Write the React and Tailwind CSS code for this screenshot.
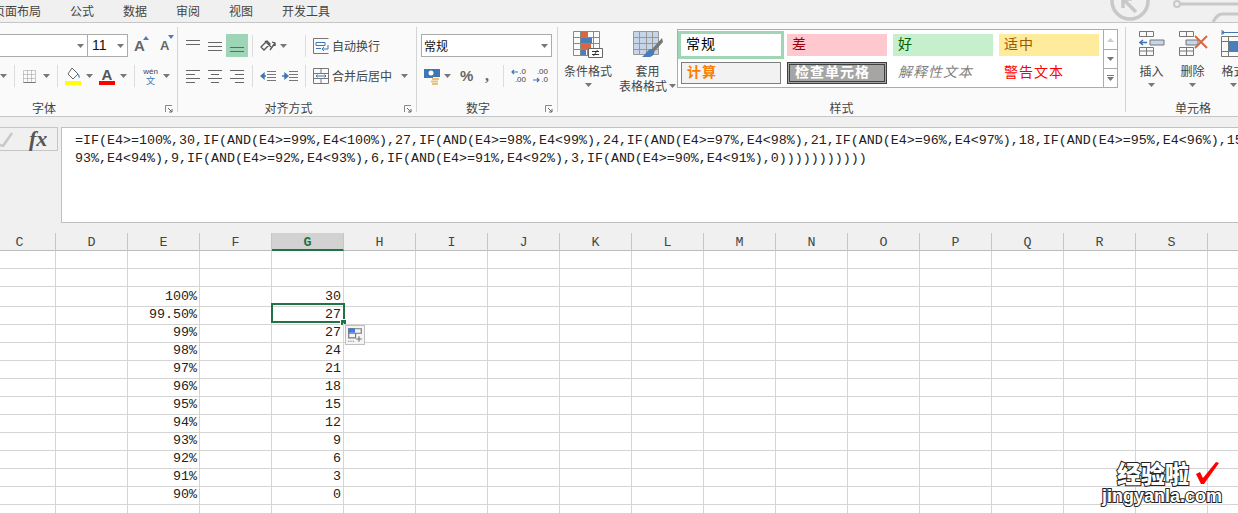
const cjk = "font-['Noto_Sans_CJK_SC',sans-serif]";
const mono = "font-['Liberation_Mono','Noto_Sans_CJK_SC',monospace]";

const columns = ['C', 'D', 'E', 'F', 'G', 'H', 'I', 'J', 'K', 'L', 'M', 'N', 'O', 'P', 'Q', 'R', 'S', 'T'];

const rows = [
  {},
  {},
  { e: '100%', g: '30' },
  { e: '99.50%', g: '27', selected: true },
  { e: '99%', g: '27', paste: true },
  { e: '98%', g: '24' },
  { e: '97%', g: '21' },
  { e: '96%', g: '18' },
  { e: '95%', g: '15' },
  { e: '94%', g: '12' },
  { e: '93%', g: '9' },
  { e: '92%', g: '6' },
  { e: '91%', g: '3' },
  { e: '90%', g: '0' },
  {},
];

const Caret = ({ className = '' }) => (
  <svg width="7" height="4" viewBox="0 0 7 4" className={`shrink-0 ${className}`}>
    <path d="M0 0h7L3.5 4z" fill="#777" />
  </svg>
);

const Sep = ({ className = '' }) => <div className={`w-px h-[22px] shrink-0 bg-[#dcdcdc] ${className}`} />;

const Launcher = () => (
  <svg width="8" height="8" viewBox="0 0 8 8" className="absolute right-[4px] top-[5px]">
    <path d="M0.5 7V0.5H7" fill="none" stroke="#888" />
    <path d="M3 3l4 4M7 4v3H4" fill="none" stroke="#666" />
  </svg>
);

const Lines = ({ widths, y, className = '' }) => (
  <svg width="14" height="14" viewBox="0 0 14 14" className={`shrink-0 ${className}`}>
    {widths.map((w, i) => (
      <path key={i} d={`M${w[0]} ${y + i * 4 + 0.5}H${w[1]}`} stroke="#666" />
    ))}
  </svg>
);

const Indent = ({ flip, className = '' }) => (
  <svg width="16" height="12" viewBox="0 0 16 12" className={`shrink-0 ${className}`}>
    <path d="M7 1.5h9M7 4.5h9M7 7.5h9M7 10.5h9" stroke="#777" />
    <path d={flip ? 'M0 6h4M3 3.5L6 6 3 8.5z' : 'M2 6h4M4 3.5L1 6l3 2.5z'} stroke="#3f77b5" fill="#3f77b5" strokeWidth="1.4" />
  </svg>
);

const GroupLabel = ({ children, launcher }) => (
  <div className={`relative h-[16px] mt-auto -mb-[4px] text-center text-[12px] leading-[16px] text-[#444] ${cjk}`}>
    {children}
    {launcher && <Launcher />}
  </div>
);

const Group = ({ className, children }) => (
  <div className={`flex flex-col shrink-0 my-[4px] ${className}`}>{children}</div>
);

const FontGroup = () => (
  <Group className="w-[178px] border-r border-[#d4d4d4]">
    <div className="flex items-center h-[23px] mt-[7px]">
      <div className="w-[89px] -ml-px h-[23px] border border-[#ababab] bg-white flex items-center justify-end pr-[3px]">
        <Caret />
      </div>
      <div className="w-[40px] h-[23px] border border-l-0 border-[#ababab] bg-white flex items-center justify-between pl-[4px] pr-[3px]">
        <span className="text-[14px] font-['Liberation_Sans',sans-serif] text-[#111]">11</span>
        <Caret />
      </div>
      <div className="relative ml-[6px] w-[14px] text-[15px] font-bold leading-none text-[#666] font-['Liberation_Sans',sans-serif]">
        A
        <svg width="6" height="4" viewBox="0 0 6 4" className="absolute left-[9px] -top-[2px]"><path d="M3 0l3 4H0z" fill="#4a7ebb" /></svg>
      </div>
      <div className="relative ml-[12px] w-[12px] text-[13px] font-bold leading-none text-[#666] font-['Liberation_Sans',sans-serif]">
        A
        <svg width="6" height="4" viewBox="0 0 6 4" className="absolute left-[8px] -top-[4px]"><path d="M0 0h6L3 4z" fill="#4a7ebb" /></svg>
      </div>
    </div>
    <div className="flex items-center h-[22px] mt-[8px]">
      <Caret />
      <Sep className="ml-[7px]" />
      <svg width="13" height="13" viewBox="0 0 13 13" className="ml-[8px] shrink-0">
        <path d="M.5.5h12v12H.5zM4.5.5v12M8.5.5v12M.5 4.5h12M.5 8.5h12" fill="none" stroke="#999" strokeDasharray="1 1" />
        <path d="M.5 12.5h12" stroke="#777" />
      </svg>
      <Caret className="ml-[7px]" />
      <Sep className="ml-[7px]" />
      <svg width="16" height="18" viewBox="0 0 16 18" className="ml-[7px] shrink-0">
        <path d="M7 1l6 6-5 5-5-5z" fill="#fff" stroke="#666" />
        <path d="M13 7c1.5 1 2 2.500 1.500 4-1-.5-1.500-2-1.500-4z" fill="#3f77b5" />
        <path d="M0 14h16v4H0z" fill="#ffff00" />
      </svg>
      <Caret className="ml-[5px]" />
      <div className="relative ml-[6px] w-[16px] h-[18px] text-center text-[15px] leading-[15px] text-[#555] font-bold font-['Liberation_Sans',sans-serif]">
        A
        <div className="absolute left-0 bottom-0 w-[16px] h-[4px] bg-[#ff0000]" />
      </div>
      <Caret className="ml-[5px]" />
      <Sep className="ml-[7px]" />
      <div className="ml-[8px] w-[15px] flex flex-col items-center leading-none">
        <span className="text-[8px] text-[#444] font-['Liberation_Sans',sans-serif]">wén</span>
        <span className={`text-[9px] text-[#3f77b5] ${cjk}`}>文</span>
      </div>
      <Caret className="ml-[5px]" />
    </div>
    <GroupLabel launcher>
      <span className="-ml-[89px] inline-block">字体</span>
    </GroupLabel>
  </Group>
);

const AlignGroup = () => (
  <Group className="w-[239px] border-r border-[#d4d4d4]">
    <div className="flex items-center h-[23px] mt-[7px]">
      <Lines className="ml-[8px]" widths={[[0, 14], [0, 14]]} y={1} />
      <Lines className="ml-[8px]" widths={[[0, 14], [0, 14], [0, 14]]} y={3} />
      <div className="ml-[4px] w-[22px] h-[23px] bg-[#9fd5b7] flex items-end justify-center pb-[3px]">
        <Lines widths={[[0, 14], [0, 14]]} y={7} />
      </div>
      <Sep className="ml-[4px]" />
      <svg width="17" height="16" viewBox="0 0 17 16" className="ml-[7px] shrink-0">
        <path d="M1 9l6-6 3 3-6 6zM5 3l6 6M10 12l5-7M12 4l3 1 0 3" fill="none" stroke="#555" strokeWidth="1.300" />
      </svg>
      <Caret className="ml-[3px]" />
      <Sep className="ml-[18px]" />
      <svg width="16" height="16" viewBox="0 0 16 16" className="ml-[7px] shrink-0">
        <path d="M.5.5h15M.5.500v15h15" fill="none" stroke="#777" />
        <path d="M3 4.500h9v3H3zM3 10.500h5" fill="none" stroke="#3f77b5" />
        <path d="M15 7v4h-5M11 9l-2 2 2 2" fill="none" stroke="#3f77b5" />
      </svg>
      <span className={`ml-[3px] text-[12px] text-[#444] ${cjk}`}>自动换行</span>
    </div>
    <div className="flex items-center h-[22px] mt-[8px]">
      <Lines className="ml-[8px]" widths={[[0, 14], [0, 9], [0, 14], [0, 9]]} y={1} />
      <Lines className="ml-[8px]" widths={[[0, 14], [3, 11], [0, 14], [3, 11]]} y={1} />
      <Lines className="ml-[8px]" widths={[[0, 14], [5, 14], [0, 14], [5, 14]]} y={1} />
      <Sep className="ml-[8px]" />
      <Indent className="ml-[7px]" />
      <Indent flip className="ml-[6px]" />
      <Sep className="ml-[7px]" />
      <svg width="16" height="16" viewBox="0 0 16 16" className="ml-[7px] shrink-0">
        <path d="M.5.500h15v15H.5zM.5 5.500h15M.5 10.500h15M8 .500v5M8 10.500v5" fill="none" stroke="#777" />
        <path d="M3 8h10M4.500 6.500L3 8l1.500 1.500M11.500 6.500L13 8l-1.500 1.500" fill="none" stroke="#3f77b5" />
      </svg>
      <span className={`ml-[3px] w-[60px] whitespace-nowrap text-[12px] text-[#444] ${cjk}`}>合并后居中</span>
      <Caret className="ml-[9px]" />
    </div>
    <GroupLabel launcher>
      <span className="-ml-[17px] inline-block">对齐方式</span>
    </GroupLabel>
  </Group>
);

const NumberGroup = () => (
  <Group className="w-[141px] border-r border-[#d4d4d4]">
    <div className="flex items-center h-[23px] mt-[7px]">
      <div className={`ml-[4px] w-[131px] h-[23px] border border-[#ababab] bg-white flex items-center justify-between pl-[2px] pr-[3px] text-[12px] text-[#111] ${cjk}`}>
        常规
        <Caret />
      </div>
    </div>
    <div className="flex items-center h-[22px] mt-[8px]">
      <svg width="16" height="17" viewBox="0 0 16 17" className="ml-[7px] shrink-0">
        <path d="M0 1h16v8H9v1H0z" fill="#3f77b5" />
        <circle cx="7" cy="5" r="2.500" fill="#fff" />
        <path d="M8 10h7v2H8zM7 12.500h7v2H7zM8 15h6v2H8z" fill="#e8c27a" />
      </svg>
      <Caret className="ml-[4px]" />
      <span className="ml-[9px] w-[12px] text-center text-[15px] font-bold text-[#666] font-['Liberation_Sans',sans-serif]">%</span>
      <span className="ml-[12px] w-[6px] text-center text-[16px] font-bold leading-[10px] text-[#666] font-['Liberation_Serif',serif]">,</span>
      <Sep className="ml-[13px]" />
      <div className="relative ml-[7px] w-[15px] h-[16px] text-[8px] leading-[8px] text-[#444] font-['Liberation_Sans',sans-serif]">
        <div className="text-right">.0</div>
        <div className="text-right">.00</div>
        <svg width="7" height="6" viewBox="0 0 7 6" className="absolute left-0 top-[1px]"><path d="M7 3H1M3 1L1 3l2 2" fill="none" stroke="#3f77b5" strokeWidth="1.200" /></svg>
      </div>
      <div className="relative ml-[7px] w-[15px] h-[16px] text-[8px] leading-[8px] text-[#444] font-['Liberation_Sans',sans-serif]">
        <div className="text-right">.00</div>
        <div className="text-right">.0</div>
        <svg width="7" height="6" viewBox="0 0 7 6" className="absolute left-0 top-[9px]"><path d="M0 3h6M4 1l2 2-2 2" fill="none" stroke="#3f77b5" strokeWidth="1.200" /></svg>
      </div>
    </div>
    <GroupLabel launcher>
      <span className="-ml-[18px] inline-block">数字</span>
    </GroupLabel>
  </Group>
);

const styleCell = 'h-[22px] flex items-center pl-[5px] pb-[3px] text-[14px] tracking-[1px] whitespace-nowrap';

const StylesGroup = () => (
  <Group className="w-[568px] border-r border-[#d4d4d4]">
    <div className="flex items-start h-[60px] mt-[2px]">
      <div className={`w-[60px] flex flex-col items-center text-[12px] leading-[15px] text-[#444] ${cjk}`}>
        <svg width="30" height="27" viewBox="0 0 30 27" className="mb-[5px] mt-[2px]">
          <path d="M.5.500h26v24H.5zM7.500.500v24M14.500.500v24M20.500.500v24M.5 6.500h26M.5 12.500h26M.5 18.500h26" fill="none" stroke="#888" />
          <path d="M8 1h6v5H8zM8 13h10v5H8z" fill="#d9663f" />
          <path d="M8 7h11v5H8zM8 19h5v5H8z" fill="#4a7ebb" />
          <path d="M15.500 17.500h14v9h-14z" fill="#fff" stroke="#666" />
          <path d="M19 20.500h7M19 23.500h7M24.500 19l-4 6" fill="none" stroke="#333" />
        </svg>
        条件格式
        <Caret className="mt-[5px]" />
      </div>
      <div className={`w-[59px] flex flex-col items-center text-[12px] leading-[15px] text-[#444] ${cjk}`}>
        <svg width="30" height="28" viewBox="0 0 30 28" className="mb-[4px] mt-[2px]">
          <path d="M.5.500h25v23H.5z" fill="#c7d5e8" stroke="#999" />
          <path d="M.5 6.500h25M.5 12.500h25M.5 18.500h25M6.500.500v23M13.500.500v23M19.500.500v23" stroke="#999" />
          <path d="M29 7L18 19l2 3L30 11z" fill="#777" />
          <path d="M18 18c-4 1-5 5-9 8h8c3-1 5-3 4-6z" fill="#4a7ebb" />
        </svg>
        <span>套用</span>
        <div className="flex items-center whitespace-nowrap">
          表格格式
          <Caret className="ml-[2px]" />
        </div>
      </div>
      <div className={`w-[441px] h-[59px] border border-[#ababab] bg-white flex ${cjk}`}>
        <div className="w-[425px] pl-[3px] pt-[4px] grid grid-cols-[repeat(4,100px)] auto-rows-[22px] gap-x-[6px] gap-y-[6px]">
          <div className={`${styleCell} outline-3 outline-[#a0d5b5] text-black`}>常规</div>
          <div className={`${styleCell} bg-[#ffc7ce] text-[#9c0006]`}>差</div>
          <div className={`${styleCell} bg-[#c6efce] text-[#006100]`}>好</div>
          <div className={`${styleCell} bg-[#ffeb9c] text-[#9c5700]`}>适中</div>
          <div className={`${styleCell} bg-[#f2f2f2] border border-[#7f7f7f] font-bold text-[#fa7d00]`}>计算</div>
          <div className={`${styleCell} bg-[#a5a5a5] border-[3px] border-double border-[#3f3f3f] font-bold text-white`}>检查单元格</div>
          <div className={`${styleCell} italic text-[#7f7f7f]`}>解释性文本</div>
          <div className={`${styleCell} text-[#ff0000]`}>警告文本</div>
        </div>
        <div className="w-[14px] border-l border-[#ababab] flex flex-col">
          <div className="h-[20px] flex items-center justify-center border-b border-[#ababab]">
            <svg width="7" height="4" viewBox="0 0 7 4"><path d="M3.500 0L7 4H0z" fill="#ccc" /></svg>
          </div>
          <div className="h-[19px] flex items-center justify-center border-b border-[#ababab]">
            <Caret />
          </div>
          <div className="flex-1 flex flex-col items-center justify-center gap-[1px]">
            <div className="w-[7px] h-px bg-[#777]" />
            <Caret />
          </div>
        </div>
      </div>
    </div>
    <GroupLabel>样式</GroupLabel>
  </Group>
);

const CellButton = ({ label, children }) => (
  <div className={`w-[41px] shrink-0 flex flex-col items-center text-[12px] leading-[15px] text-[#444] ${cjk}`}>
    <div className="h-[30px] mb-[4px]">{children}</div>
    <span className="whitespace-nowrap">{label}</span>
    <Caret className="mt-[5px]" />
  </div>
);

const CellsGroup = () => (
  <Group className="w-[134px]">
    <div className="flex items-start h-[60px] mt-[2px] pl-[5px]">
      <CellButton label="插入">
        <svg width="26" height="28" viewBox="0 0 26 28">
          <path d="M.5 2.500h14v5H.5zM7.500 2.500v5M.5 18.500h14v8H.5zM7.500 18.500v8M.5 22h14" fill="none" stroke="#777" />
          <path d="M11 11h14v5H11z" fill="#c5d5ea" stroke="#777" />
          <path d="M1 13.500h7M4 11l-3 2.500L4 16" fill="none" stroke="#3f77b5" strokeWidth="1.500" />
        </svg>
      </CellButton>
      <CellButton label="删除">
        <svg width="30" height="28" viewBox="0 0 30 28" className="ml-[2px]">
          <path d="M.5 2.500h14v5H.5zM7.500 2.500v5M.5 18.500h14v8H.5zM7.500 18.500v8M.5 22h14" fill="none" stroke="#777" />
          <path d="M7 11h12v5H7z" fill="#c5d5ea" stroke="#777" />
          <path d="M16 7l12 12M28 7L16 19" stroke="#d9663f" strokeWidth="2" />
        </svg>
      </CellButton>
      <CellButton label="格式">
        <svg width="26" height="28" viewBox="0 0 26 28">
          <path d="M1 1v5M1 3.500h24M3 2L1 3.500 3 5" fill="none" stroke="#3f77b5" />
          <path d="M.5 7.500h25v20H.5zM7.500 7.500v20M17.500 7.500v20M.5 12.500h25M.5 22.500h25" fill="none" stroke="#777" />
          <path d="M8 12h9v10H8z" fill="#4a7ebb" />
        </svg>
      </CellButton>
    </div>
    <GroupLabel>单元格</GroupLabel>
  </Group>
);

const Ribbon = () => (
  <div className="flex h-[95px] bg-[#fafafa] border-y border-[#c6c6c6]">
    <FontGroup />
    <AlignGroup />
    <NumberGroup />
    <StylesGroup />
    <CellsGroup />
  </div>
);

const TabBar = () => (
  <div className={`relative h-[22px] bg-[#f0f0f0] flex items-center gap-[29px] -ml-[7px] text-[12px] text-[#444] ${cjk}`}>
    <span>页面布局</span>
    <span>公式</span>
    <span>数据</span>
    <span>审阅</span>
    <span>视图</span>
    <span>开发工具</span>
  </div>
);

const FormulaBar = () => (
  <div className="bg-[#f0f0f0] h-[116px] pt-[10px] flex items-start">
    <div className="w-[58px] h-[24px] border border-l-0 border-[#c6c6c6] flex items-center shrink-0">
      <svg width="14" height="16" viewBox="0 0 14 16" className="-ml-[1px]">
        <path d="M1 14l3 1L13 2" fill="none" stroke="#c8c8c8" strokeWidth="2.500" />
      </svg>
      <span className="ml-[16px] text-[22px] italic font-bold leading-none text-[#555] font-['Liberation_Serif',serif]">fx</span>
    </div>
    <div className={`ml-[3px] flex-1 h-[96px] border border-r-0 border-[#c0c0c0] bg-white pl-[13px] pt-[4px] text-[13.33px] leading-[18px] text-[#222] whitespace-nowrap overflow-hidden ${mono}`}>
      <div>{'=IF(E4>=100%,30,IF(AND(E4>=99%,E4<100%),27,IF(AND(E4>=98%,E4<99%),24,IF(AND(E4>=97%,E4<98%),21,IF(AND(E4>=96%,E4<97%),18,IF(AND(E4>=95%,E4<96%),15,'}</div>
      <div>{'93%,E4<94%),9,IF(AND(E4>=92%,E4<93%),6,IF(AND(E4>=91%,E4<92%),3,IF(AND(E4>=90%,E4<91%),0)))))))))))'}</div>
    </div>
  </div>
);

const Sheet = () => (
  <div className={`-ml-[16px] text-[13.33px] text-[#222] ${mono}`}>
    <div className="grid grid-cols-[repeat(18,72px)] h-[18px] bg-[#f0f0f0] border-b border-[#bdbdbd]">
      {columns.map((c) =>
        c === 'G' ? (
          <div key={c} className="h-[18px] border-r border-[#c6c6c6] border-b-2 border-b-[#217346] bg-[#d2d2d2] pt-[1px] text-center font-bold leading-[18px] text-[#217346]">
            {c}
          </div>
        ) : (
          <div key={c} className="border-r border-[#c6c6c6] pt-[1px] text-center leading-[18px] text-[#444]">
            {c}
          </div>
        )
      )}
    </div>
    {rows.map((row, i) => (
      <div key={i} className="grid grid-cols-[repeat(18,72px)] h-[18px]">
        {columns.map((c) => (
          <div key={c} className="relative border-r border-b border-[#d4d4d4] pr-[2px] pt-[1px] text-right leading-[18px]">
            {c === 'E' && row.e}
            {c === 'G' && row.g}
            {c === 'G' && row.selected && (
              <div className="absolute -left-px -top-[2px] w-[74px] h-[20px] border-2 border-[#217346]">
                <div className="absolute -right-[3px] -bottom-[4px] w-[5px] h-[5px] bg-[#217346] outline outline-white" />
              </div>
            )}
            {c === 'H' && row.paste && (
              <div className="absolute left-[1px] top-[2px] w-[20px] h-[20px] z-10 border border-[#c0c0c0] bg-[#f4f4f4] flex items-center justify-center">
                <svg width="16" height="16" viewBox="0 0 14 14">
                  <path d="M1 1h6v4H1z" fill="#3b78ff" />
                  <path d="M1.500 1.500h11v4h-11zM1.500 5.500h6v4h-6z" fill="none" stroke="#777" />
                  <path d="M1 12.500h6" stroke="#777" strokeDasharray="1 1" />
                  <path d="M10.500 8v5M8 10.500h5" stroke="#777" />
                </svg>
              </div>
            )}
          </div>
        ))}
      </div>
    ))}
  </div>
);

const Watermark = () => (
  <>
    <svg width="128" height="22" viewBox="0 0 128 22" className="absolute left-[1110px] top-0">
      <circle cx="20" cy="1" r="18" fill="none" stroke="#c8c8c8" strokeWidth="3.500" />
      <path d="M13 -1h9M13 -1v9M13 -1l13 13" fill="none" stroke="#c8c8c8" strokeWidth="3.500" />
      <circle cx="67" cy="4" r="3" fill="none" stroke="#c8c8c8" strokeWidth="2" />
      <path d="M70 4h58M128 14h-16c-4 0-6 3-9 8" fill="none" stroke="#c8c8c8" strokeWidth="3" />
    </svg>
    <div className="absolute left-[1100px] top-[460px] w-[124px] flex flex-col items-center">
      <div className="flex items-center self-start ml-[17px]">
        <span className={`text-[24px] leading-[26px] font-black text-white [paint-order:stroke_fill] [-webkit-text-stroke:2px_#222] ${cjk}`}>经验啦</span>
        <svg width="24" height="24" viewBox="0 0 24 24" className="ml-[6px]">
          <path d="M1 13l4-2 3 6L21 1l3 1L9 23H6z" fill="#ff0000" />
        </svg>
      </div>
      <span className="text-[18px] leading-[20px] font-bold whitespace-nowrap text-white [paint-order:stroke_fill] [-webkit-text-stroke:2px_#222] font-['Liberation_Sans',sans-serif]">jingyanla.com</span>
    </div>
  </>
);

const App = () => (
  <div className="relative w-[1238px] h-[513px] overflow-hidden bg-white">
    <TabBar />
    <Ribbon />
    <FormulaBar />
    <Sheet />
    <Watermark />
  </div>
);

export default App;
